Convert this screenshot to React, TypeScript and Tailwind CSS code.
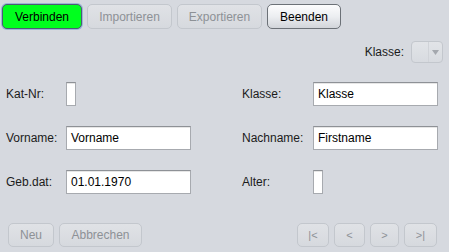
import { ReactNode } from 'react';

type BtnKind = 'green' | 'normal' | 'disabled';

function Btn({ kind, w, children }: { kind: BtnKind; w: string; children: ReactNode }) {
  const base = 'h-[25px] rounded-[5px] border text-[12px] flex items-center justify-center';
  const look =
    kind === 'green'
      ? 'bg-[#00ff1e] border-[#4b5d73] text-black shadow-[0_0_0_1px_#9db4d6]'
      : kind === 'normal'
      ? 'bg-gradient-to-b from-[#fcfcfd] via-[#eceef1] to-[#d2d5da] border-[#6c7177] text-black'
      : 'bg-gradient-to-b from-[#e0e2e6] to-[#d6d9de] border-[#c3c7cd] text-[#8d9196]';
  return <div className={`${base} ${look} ${w}`}>{children}</div>;
}

function Field({ w, value }: { w: string; value?: string }) {
  return (
    <div
      className={`h-[24px] ${w} bg-white border border-[#a7aaaf] border-t-[#8e9196] shadow-[inset_0_1px_0_#e6e6e6] flex items-center px-[4px] text-[12px] text-black`}
    >
      {value}
    </div>
  );
}

function NavBtn({ w, children }: { w: string; children: ReactNode }) {
  return (
    <div
      className={`h-[24px] ${w} rounded-[5px] border border-[#c3c7cd] bg-gradient-to-b from-[#e0e2e6] to-[#d6d9de] text-[#8d9196] text-[11px] flex items-center justify-center`}
    >
      {children}
    </div>
  );
}

export default function App() {
  return (
    <div
      className="w-[449px] h-[252px] bg-[#d6d9df] flex flex-col overflow-hidden text-[#1b1b1b]"
      style={{ fontFamily: '"Liberation Sans", Arial, sans-serif' }}
    >
      {/* toolbar */}
      <div className="flex gap-[5px] pl-[2px] pt-[4px]">
        <Btn kind="green" w="w-[80px]">Verbinden</Btn>
        <Btn kind="disabled" w="w-[85px]">Importieren</Btn>
        <Btn kind="disabled" w="w-[85px]">Exportieren</Btn>
        <Btn kind="normal" w="w-[74px]">Beenden</Btn>
      </div>

      {/* class filter */}
      <div className="flex justify-end items-center gap-[7px] pr-[6px] mt-[12px]">
        <span className="text-[12px]">Klasse:</span>
        <div className="w-[32px] h-[22px] rounded-[4px] border border-[#c3c7cd] bg-gradient-to-b from-[#e2e4e8] to-[#d8dbe0] flex">
          <div className="flex-1" />
          <div className="w-[14px] border-l border-[#d0d3d8] flex items-center justify-center">
            <svg width="7" height="5" viewBox="0 0 7 5">
              <path d="M0 0h7L3.5 5z" fill="#a4a8ae" />
            </svg>
          </div>
        </div>
      </div>

      {/* form */}
      <div className="grid grid-cols-[60px_125px_51px_71px_125px] gap-y-[20px] pl-[6px] mt-[19px] text-[12px] items-center">
        <span>Kat-Nr:</span>
        <Field w="w-[10px]" />
        <span />
        <span>Klasse:</span>
        <Field w="w-[125px]" value="Klasse" />

        <span>Vorname:</span>
        <Field w="w-[125px]" value="Vorname" />
        <span />
        <span>Nachname:</span>
        <Field w="w-[125px]" value="Firstname" />

        <span>Geb.dat:</span>
        <Field w="w-[125px]" value="01.01.1970" />
        <span />
        <span>Alter:</span>
        <Field w="w-[10px]" />
      </div>

      {/* bottom bar */}
      <div className="mt-auto flex justify-between items-center pl-[8px] pr-[12px] pb-[5px]">
        <div className="flex gap-[5px]">
          <NavBtn w="w-[46px] text-[12px]">Neu</NavBtn>
          <NavBtn w="w-[83px] text-[12px]">Abbrechen</NavBtn>
        </div>
        <div className="flex gap-[5px]">
          <NavBtn w="w-[32px]">|&lt;</NavBtn>
          <NavBtn w="w-[31px]">&lt;</NavBtn>
          <NavBtn w="w-[29px]">&gt;</NavBtn>
          <NavBtn w="w-[33px]">&gt;|</NavBtn>
        </div>
      </div>
    </div>
  );
}
